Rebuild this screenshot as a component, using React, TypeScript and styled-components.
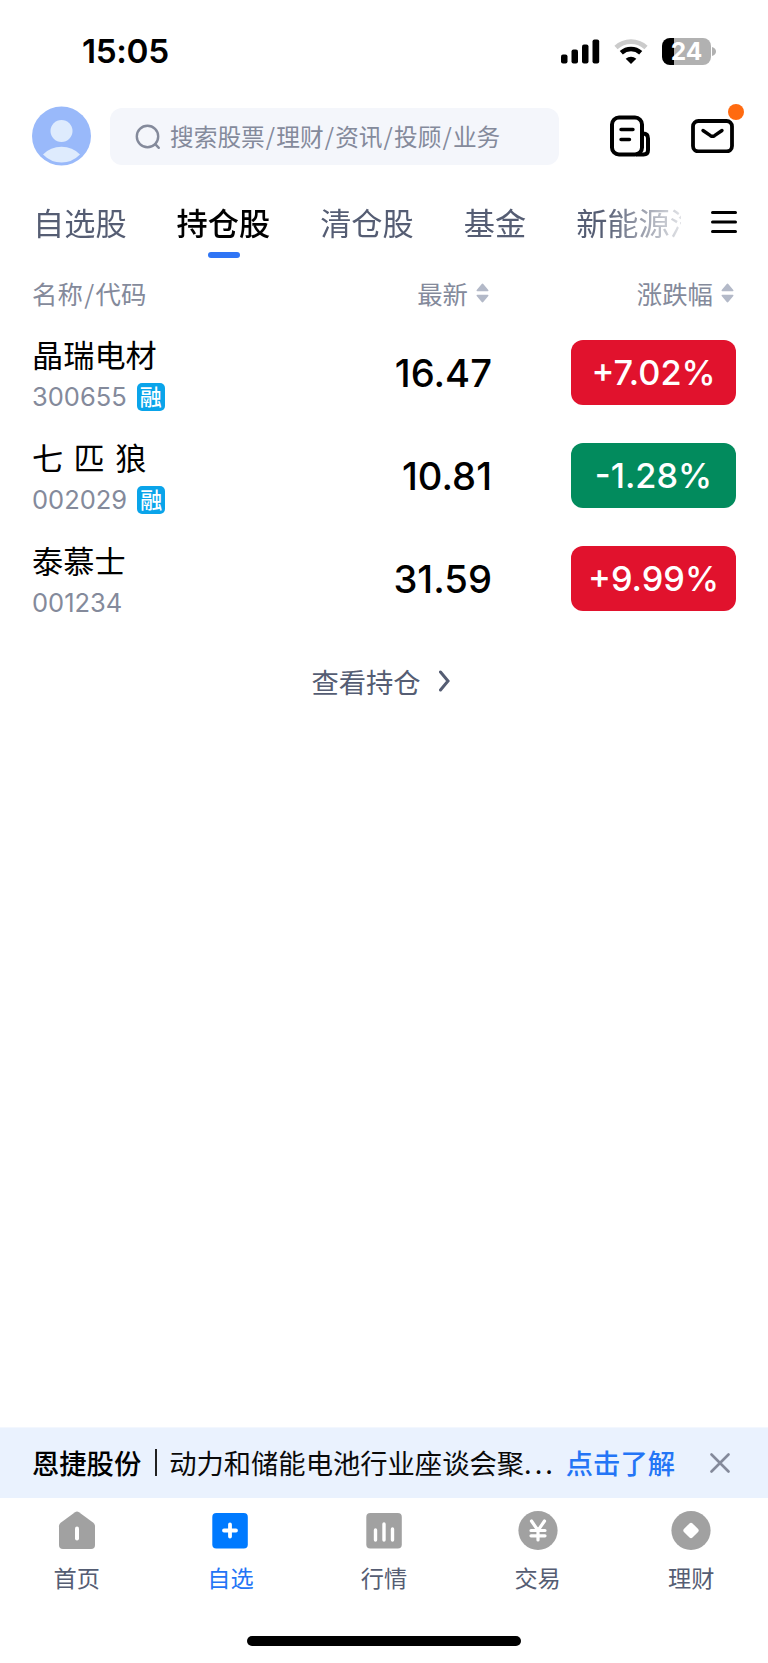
import React from "react";
import styled, { createGlobalStyle } from "styled-components";

const Global = createGlobalStyle`
  * { box-sizing: border-box; }
  body { margin: 0; background: #fff; }
  svg { display: block; flex: none; }
`;

const cjk = `"Noto Sans CJK SC", sans-serif`;
const latin = `Inter, "Noto Sans CJK SC", sans-serif`;

const Screen = styled.div`
  width: 768px;
  height: 1663px;
  display: flex;
  flex-direction: column;
  background: #fff;
  color: #0a0a0a;
  font-family: ${cjk};
  overflow: hidden;
  white-space: nowrap;
`;

const StatusBar = styled.header`
  height: 101px;
  flex: none;
  display: flex;
  align-items: center;
  justify-content: space-between;
  padding: 1px 52px 0 82px;
`;
const Clock = styled.time`
  font: 600 33.3px/40px ${latin};
  letter-spacing: -0.35px;
  color: #000;
`;
const StatusIcons = styled.div`
  display: flex;
  align-items: center;
`;
const Battery = styled.div`
  width: 49px;
  height: 27px;
  margin-left: 14px;
  border-radius: 8px;
  background: linear-gradient(90deg, #000 0 12px, #b1b1b1 12px);
  display: flex;
  align-items: center;
  justify-content: center;
  font: 700 24.5px/27px ${latin};
  color: #fff;
`;

const TopRow = styled.div`
  height: 70px;
  flex: none;
  display: flex;
  align-items: center;
  padding: 0 32px;
`;
const SearchBox = styled.div`
  width: 449px;
  height: 57px;
  margin: 1px 51px 0 19px;
  padding-left: 25px;
  border-radius: 12px;
  background: #f4f6fb;
  color: #848a9b;
  display: flex;
  align-items: center;
`;
const SearchText = styled.span`
  font-size: 23.7px;
  line-height: 36px;
  margin-left: 9px;
  padding-bottom: 2px;
`;
const Slash = styled.span`
  padding: 0 1.1px;
`;
const MailButton = styled.div`
  position: relative;
  margin-left: 41px;
`;
const Dot = styled.i`
  position: absolute;
  right: -10px;
  top: -15px;
  width: 16px;
  height: 16px;
  border-radius: 50%;
  background: #ff6a10;
`;

const TabBar = styled.nav`
  height: 93px;
  flex: none;
  display: flex;
  padding: 29px 31px 0 33px;
`;
const Tabs = styled.div`
  width: 648px;
  display: flex;
  gap: 50px;
  overflow: hidden;
  mask-image: linear-gradient(90deg, #000 570px, transparent 665px);
`;
const Tab = styled.div<{ $active?: boolean }>`
  flex: none;
  font-size: 31.2px;
  line-height: 44px;
  font-weight: ${(p) => (p.$active ? 500 : 400)};
  color: ${(p) => (p.$active ? "#000" : "#555d73")};
  display: flex;
  flex-direction: column;
  align-items: center;
  &::after {
    content: "";
    width: 32px;
    height: 6px;
    margin: 8px 0 0 1px;
    border-radius: 3px;
    background: ${(p) => (p.$active ? "#2f75f5" : "transparent")};
  }
`;
const MenuIcon = styled.svg`
  margin: 10px 0 0 auto;
`;

const grid = `
  display: grid;
  grid-template-columns: 240px 219px 245px;
  padding: 0 32px;
  align-items: center;
`;
const TableHead = styled.div`
  ${grid}
  height: 57px;
  flex: none;
  font-size: 25.4px;
  line-height: 36px;
  color: #848a9b;
  > :first-child { letter-spacing: 0.2px; }
`;
const HeadCell = styled.div`
  display: flex;
  align-items: center;
  justify-content: flex-end;
  gap: 8px;
  padding-right: 2px;
  &:first-child { justify-content: flex-start; gap: 0; }
  svg { margin-top: 1px; }
`;
const Row = styled.div`
  ${grid}
  height: 103px;
  flex: none;
`;
const Name = styled.div`
  font-size: 31.2px;
  line-height: 42px;
  padding-top: 3px;
  color: #000;
  word-spacing: 3.4px;
`;
const CodeLine = styled.div`
  height: 41px;
  display: flex;
  align-items: center;
  gap: 10px;
  font: 400 25.5px/41px ${latin};
  color: #848a9b;
  padding-top: 3px;
`;
const MarginTag = styled.span`
  width: 28px;
  height: 28px;
  border-radius: 5px;
  background: #0aa4ea;
  color: #fff;
  font: 500 22px/25px ${cjk};
  text-align: center;
`;
const Price = styled.div`
  font: 500 38.2px/46px ${latin};
  color: #000;
  text-align: right;
  margin-right: -1px;
`;
const Change = styled.div<{ $down?: boolean }>`
  width: 165px;
  height: 65px;
  justify-self: end;
  border-radius: 12px;
  background: ${(p) => (p.$down ? "#028b5d" : "#e1122d")};
  color: #fff;
  font: 500 34.3px/66px ${latin};
  text-align: center;
`;
const ViewAll = styled.div`
  display: flex;
  align-items: center;
  justify-content: center;
  gap: 18px;
  margin-top: 31px;
  padding-right: 7px;
  font-size: 27.3px;
  line-height: 40px;
  color: #555d73;
`;

const Banner = styled.div`
  height: 71px;
  flex: none;
  margin-top: auto;
  background: #eaf2fe;
  border-top: 1px solid #f3f7fe;
  display: flex;
  align-items: center;
  padding: 0 38px 1px 32px;
  font-size: 27.3px;
  line-height: 40px;
  span, b, a { margin-top: -1px; }
`;
const BannerTitle = styled.b`
  font-weight: 500;
  color: #000;
`;
const Rule = styled.i`
  width: 2px;
  height: 27px;
  margin: 0 12px 0 14px;
  background: #222;
`;
const Ellipsis = styled.span`
  letter-spacing: 3px;
`;
const BannerLink = styled.a`
  color: #2475f6;
  font-weight: 500;
  margin-left: auto;
  margin-right: 35px;
`;

const BottomNav = styled.nav`
  height: 138px;
  flex: none;
  display: grid;
  grid-template-columns: repeat(5, 1fr);
  padding-top: 12px;
`;
const NavItem = styled.div<{ $active?: boolean }>`
  display: flex;
  flex-direction: column;
  align-items: center;
  font-size: 23.2px;
  line-height: 34px;
  gap: 9px;
  color: ${(p) => (p.$active ? "#2475f6" : "#555d73")};
`;
const HomeIndicator = styled.div`
  width: 274px;
  height: 10px;
  flex: none;
  margin: 0 auto 17px;
  border-radius: 5px;
  background: #000;
`;

const Slashed = ({ parts }: { parts: string[] }) => (
  <>
    {parts.map((part, i) => (
      <React.Fragment key={part}>
        {i > 0 && <Slash>/</Slash>}
        {part}
      </React.Fragment>
    ))}
  </>
);

const Sort = () => (
  <svg width="13" height="20" viewBox="0 0 13 20" fill="#b3b9c8">
    <path d="M5.5 1.2q1-1.2 2 0l4.800 5.800q.7 1.200-.7 1.200H1.400Q0 8.200.700 7zM5.500 18.800q1 1.200 2 0l4.800-5.800q.7-1.200-.7-1.200H1.400q-1.400 0-.7 1.200z" />
  </svg>
);

const stocks = [
  { name: "晶瑞电材", code: "300655", margin: true, price: "16.47", change: "+7.02%" },
  { name: "七 匹 狼", code: "002029", margin: true, price: "10.81", change: "-1.28%" },
  { name: "泰慕士", code: "001234", margin: false, price: "31.59", change: "+9.99%" },
];

const tabs = ["自选股", "持仓股", "清仓股", "基金", "新能源汽车"];

const strokeWhite = { stroke: "#fff", strokeLinecap: "round" as const, fill: "none" };

const navItems = [
  {
    label: "首页",
    icon: (
      <>
        <path d="M18 2.300q2-1.400 4 0l14 10.200q2 1.500 2 3.700V35q0 4-4 4H6q-4 0-4-4V16.200q0-2.200 2-3.700z" fill="#a1a1a1" />
        <path d="M20 18.500v10" {...strokeWhite} strokeWidth="4" />
      </>
    ),
  },
  {
    label: "自选",
    icon: (
      <>
        <rect x="2.300" y="3" width="35.500" height="35.500" rx="4" fill="#007aff" />
        <path d="M20 14.500v12M14 20.500h12" {...strokeWhite} strokeWidth="3.800" />
      </>
    ),
  },
  {
    label: "行情",
    icon: (
      <>
        <rect x="2.300" y="3" width="35.500" height="35.500" rx="4" fill="#a1a1a1" />
        <path d="M11.500 20v10M20 14v16M28.500 19v11" {...strokeWhite} strokeWidth="3.400" />
      </>
    ),
  },
  {
    label: "交易",
    icon: (
      <>
        <circle cx="20" cy="20.500" r="19.600" fill="#a1a1a1" />
        <path d="M13.500 11l6.500 9.500L26.500 11M20 20v10M13 20.500h14M13 25.800h14" {...strokeWhite} strokeWidth="3.200" />
      </>
    ),
  },
  {
    label: "理财",
    icon: (
      <>
        <circle cx="20" cy="20.500" r="19.600" fill="#a1a1a1" />
        <path d="M18.500 13.400q1.500-1.300 3 0l5.600 5.600q1.300 1.500 0 3l-5.600 5.600q-1.500 1.300-3 0L12.900 22q-1.300-1.500 0-3z" fill="#fff" />
      </>
    ),
  },
];

const WifiIcon = styled.svg`
  margin-left: 14px;
`;
const BatteryTip = styled.svg`
  margin-left: 1px;
`;

export default function App() {
  return (
    <Screen>
      <Global />
      <StatusBar>
        <Clock>15:05</Clock>
        <StatusIcons>
          <svg width="39" height="25" viewBox="0 0 39 25">
            <rect x="0" y="15.500" width="6.500" height="9" rx="2" />
            <rect x="10.500" y="10.500" width="6.500" height="14" rx="2" />
            <rect x="21" y="5.500" width="6.500" height="19" rx="2" />
            <rect x="31.500" y="0.500" width="6.700" height="24" rx="2" />
          </svg>
          <WifiIcon width="34" height="25" viewBox="0 0 34 25" fill="none">
            <path d="M2 8.500a22 22 0 0 1 30 0" stroke="#cbcbcb" strokeWidth="4.600" />
            <path d="M7.300 13.700a14.500 14.500 0 0 1 19.400 0" stroke="#000" strokeWidth="4.600" />
            <path d="M17 25l-5.300-5.300a8 8 0 0 1 10.600 0z" fill="#000" />
          </WifiIcon>
          <Battery>24</Battery>
          <BatteryTip width="4" height="9" viewBox="0 0 4 9">
            <path d="M0 0q4 1.200 4 4.500T0 9z" fill="#b1b1b1" />
          </BatteryTip>
        </StatusIcons>
      </StatusBar>

      <TopRow>
        <svg width="59" height="60" viewBox="0 0 59 60">
          <circle cx="29.500" cy="30" r="29.500" fill="#99b9fa" />
          <circle cx="29.500" cy="25" r="11" fill="#deebfd" />
          <path d="M11 48.500q7.500-7.700 18.500-7.700T48 48.500q-8 8-18.500 8T11 48.500z" fill="#deebfd" />
        </svg>
        <SearchBox>
          <svg width="26" height="26" viewBox="0 0 26 26" fill="none" stroke="#848a9b" strokeWidth="2.400" strokeLinecap="round">
            <circle cx="12.500" cy="12.500" r="10.700" />
            <path d="M20.200 20.200l3.600 3.600" />
          </svg>
          <SearchText>
            <Slashed parts={["搜索股票", "理财", "资讯", "投顾", "业务"]} />
          </SearchText>
        </SearchBox>
        <svg width="40" height="42" viewBox="0 0 40 42" fill="none" stroke="#000" strokeWidth="4">
          <rect x="2" y="2.500" width="30" height="37" rx="7" />
          <path d="M32 18.500h1q5 0 5 5v11.500q0 4.500-4.500 4.500H26" />
          <path d="M11 14.500h12M11 24.500h8.500" strokeWidth="3.400" strokeLinecap="round" />
        </svg>
        <MailButton>
          <svg width="43" height="34" viewBox="0 0 43 34" fill="none" stroke="#000" strokeWidth="3.800">
            <rect x="2" y="2" width="39" height="30.500" rx="5.500" />
            <path d="M12 11.500l7.500 5.200q2 1.300 4 0l7.500-5.200" strokeWidth="3.400" strokeLinecap="round" />
          </svg>
          <Dot />
        </MailButton>
      </TopRow>

      <TabBar>
        <Tabs>
          {tabs.map((t) => (
            <Tab key={t} $active={t === "持仓股"}>{t}</Tab>
          ))}
        </Tabs>
        <MenuIcon width="26" height="24" viewBox="0 0 26 24" stroke="#000" strokeWidth="3" strokeLinecap="round">
          <path d="M1.500 2.500h23M1.500 12h23M1.500 21.500h23" />
        </MenuIcon>
      </TabBar>

      <TableHead>
        <HeadCell><Slashed parts={["名称", "代码"]} /></HeadCell>
        <HeadCell>最新<Sort /></HeadCell>
        <HeadCell>涨跌幅<Sort /></HeadCell>
      </TableHead>
      {stocks.map((s) => (
        <Row key={s.code}>
          <div>
            <Name>{s.name}</Name>
            <CodeLine>
              {s.code}
              {s.margin && <MarginTag>融</MarginTag>}
            </CodeLine>
          </div>
          <Price>{s.price}</Price>
          <Change $down={s.change.startsWith("-")}>{s.change}</Change>
        </Row>
      ))}
      <ViewAll>
        查看持仓
        <svg width="11" height="22" viewBox="0 0 11 22" fill="none" stroke="#555d73" strokeWidth="3" strokeLinecap="round">
          <path d="M1.500 2l7.500 9-7.500 9" />
        </svg>
      </ViewAll>

      <Banner>
        <BannerTitle>恩捷股份</BannerTitle>
        <Rule />
        <span>动力和储能电池行业座谈会聚</span>
        <Ellipsis>...</Ellipsis>
        <BannerLink>点击了解</BannerLink>
        <svg width="20" height="20" viewBox="0 0 20 20" stroke="#848a9b" strokeWidth="2.600" strokeLinecap="round">
          <path d="M1.500 1.500l17 17M18.500 1.500l-17 17" />
        </svg>
      </Banner>
      <BottomNav>
        {navItems.map((n) => (
          <NavItem key={n.label} $active={n.label === "自选"}>
            <svg width="40" height="41" viewBox="0 0 40 41">{n.icon}</svg>
            {n.label}
          </NavItem>
        ))}
      </BottomNav>
      <HomeIndicator />
    </Screen>
  );
}
